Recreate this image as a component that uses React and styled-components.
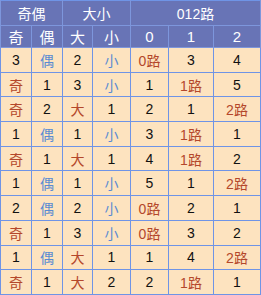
import styled, { createGlobalStyle } from "styled-components";

const Global = createGlobalStyle`
    html, body {
        margin: 0;
        padding: 0;
        background: #ffffff;
    }
`

const Table = styled.table`
    border-collapse: collapse;
    table-layout: fixed;
    width: 260px;
    font-family: "Liberation Sans", "Noto Sans CJK SC", sans-serif;
    font-size: 14px;
    text-align: center;
    border: 1px solid #6f94e6;
`

const Col = styled.col`
    width: ${p => p.$w}px;
`

const Head = styled.th`
    background: #6874b6;
    color: #ffffff;
    font-weight: 400;
    font-size: ${p => p.$big ? "14px" : "15px"};
    height: ${p => p.$big ? "24px" : "20px"};
    padding: 0;
    border: 1px solid #7d96dc;
    border-top: none;
`

const Cell = styled.td`
    background: #fde3bf;
    color: ${p => p.$tone === "red" ? "#b4472b" : p.$tone === "blue" ? "#5a8bd2" : "#111111"};
    height: 23.7px;
    padding: 0;
    border: 1px solid #6f94e6;
`

const widths = [31, 31, 30, 38, 38, 45, 47]

const rows = [
    ["3", "偶", "2", "小", "0路", "3", "4"],
    ["奇", "1", "3", "小", "1", "1路", "5"],
    ["奇", "2", "大", "1", "2", "1", "2路"],
    ["1", "偶", "1", "小", "3", "1路", "1"],
    ["奇", "1", "大", "1", "4", "1路", "2"],
    ["1", "偶", "1", "小", "5", "1", "2路"],
    ["2", "偶", "2", "小", "0路", "2", "1"],
    ["奇", "1", "3", "小", "0路", "3", "2"],
    ["1", "偶", "大", "1", "1", "4", "2路"],
    ["奇", "1", "大", "2", "2", "1路", "1"],
]

function tone(v) {
    if (v === "奇" || v === "大" || v.includes("路")) return "red";
    if (v === "偶" || v === "小") return "blue";
    return "";
}

function App() {
    return (
        <>
            <Global />
            <Table>
                <colgroup>
                    {widths.map((w, i) => <Col key={i} $w={w} />)}
                </colgroup>
                <thead>
                    <tr>
                        <Head $big colSpan={2}>奇偶</Head>
                        <Head $big colSpan={2}>大小</Head>
                        <Head $big colSpan={3}>012路</Head>
                    </tr>
                    <tr>
                        {["奇", "偶", "大", "小", "0", "1", "2"].map(h => <Head key={h}>{h}</Head>)}
                    </tr>
                </thead>
                <tbody>
                    {rows.map((r, i) =>
                        <tr key={i}>
                            {r.map((v, j) => <Cell key={j} $tone={tone(v)}>{v}</Cell>)}
                        </tr>
                    )}
                </tbody>
            </Table>
        </>
    )
}

export default App;
